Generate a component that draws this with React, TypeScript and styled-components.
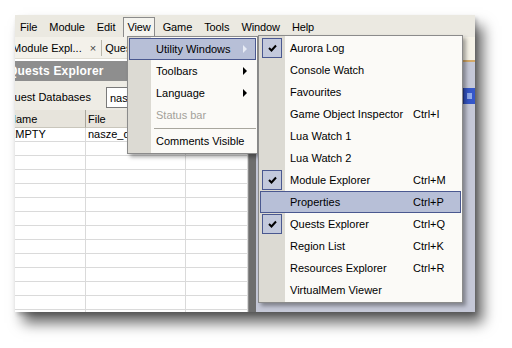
import styled, { createGlobalStyle } from 'styled-components';

const Global = createGlobalStyle`
  html, body {
    margin: 0;
    padding: 0;
    background: #ffffff;
  }
  body {
    font-family: "Liberation Sans", Arial, sans-serif;
    font-size: 11px;
    color: #000;
  }
`;

const Stage = styled.div`
  width: 512px;
  height: 348px;
  padding: 15px 0 0 15px;
  box-sizing: border-box;
  overflow: hidden;
`;

const Win = styled.div`
  position: relative;
  width: 460px;
  height: 297px;
  overflow: hidden;
  background: #ebe9e1;
  box-shadow: 8px 11px 13px rgba(0, 0, 0, 0.6), 2px 3px 4px rgba(0, 0, 0, 0.2);
`;

const MenuBar = styled.div`
  height: 22px;
  display: flex;
  align-items: flex-end;
  gap: 4px;
  padding-left: 1px;
  background: #ebe9e1;
`;

const BarItem = styled.div<{ $open?: boolean }>`
  height: 20px;
  line-height: 19px;
  padding: 0 3px;
  box-sizing: border-box;
  border: 1px solid ${p => (p.$open ? '#8b8b8b' : 'transparent')};
  border-bottom: none;
  background: ${p => (p.$open ? '#f4f3ee' : 'transparent')};
  letter-spacing: -0.1px;
`;

const Body = styled.div`
  display: flex;
  height: 275px;
`;

const LeftPane = styled.div`
  width: 233px;
  overflow: hidden;
  background: #ffffff;
`;

const LeftInner = styled.div`
  margin-left: -9px;
  width: 242px;
`;

const TabStrip = styled.div`
  height: 22px;
  display: flex;
  align-items: center;
  background: #f3f1ea;
  border-bottom: 1px solid #e0ddd3;
  box-sizing: border-box;
`;

const Tab = styled.div<{ $first?: boolean }>`
  display: flex;
  align-items: center;
  gap: 8px;
  padding: 0 ${p => (p.$first ? '5px' : '4px')} 0 ${p => (p.$first ? '6px' : '3px')};
  border-right: ${p => (p.$first ? '1px solid #b9b6aa' : 'none')};
  height: 16px;
`;

const Close = styled.span`
  font-size: 11px;
  color: #444;
`;

const TitleBar = styled.div`
  margin-top: 2px;
  height: 20px;
  line-height: 20px;
  padding-left: 2px;
  background: #8e8e8e;
  color: #ffffff;
  font-weight: bold;
  font-size: 12px;
  letter-spacing: 0.2px;
`;

const DbRow = styled.div`
  height: 29px;
  display: flex;
  align-items: center;
  background: #eeece5;
`;

const DbLabel = styled.span`
  width: 100px;
  padding-left: 0;
  padding-top: 3px;
`;

const DbInput = styled.div`
  flex: 1;
  height: 21px;
  margin-top: 3px;
  border: 1px solid #7a7a7a;
  background: #fff;
  line-height: 20px;
  padding-left: 3px;
  box-sizing: border-box;
`;

const Grid = styled.div`
  display: grid;
  grid-template-columns: 80px 100px 1fr;
`;

const HeadCell = styled.div`
  height: 18px;
  line-height: 18px;
  padding-left: 2px;
  background: #e7e4dc;
  border-right: 1px solid #a9a69c;
  border-bottom: 1px solid #c9c6bc;
  box-sizing: border-box;
`;

const Cell = styled.div`
  height: 14px;
  line-height: 13px;
  padding-left: 2px;
  border-right: 1px solid #dadada;
  border-bottom: 1px solid #dadada;
  box-sizing: border-box;
  overflow: hidden;
  white-space: nowrap;
`;

const Splitter = styled.div`
  width: 8px;
  background: #6e6e6e;
  border-left: 1px solid #8a8a8a;
  box-sizing: border-box;
`;

const RightPane = styled.div`
  flex: 1;
  display: flex;
  flex-direction: column;
  background: #c5c8d7;
`;

const RightTabs = styled.div`
  height: 23px;
  background: #f5f2e7;
  border-bottom: 2px solid #d4aa6a;
`;

const RightBody = styled.div`
  flex: 1;
  display: flex;
  justify-content: flex-end;
  padding-top: 26px;
`;

const BlueBtn = styled.div`
  width: 12px;
  height: 16px;
  background: #3557c9;
  border-left: 1px solid #2a3f94;
  box-sizing: border-box;
  display: flex;
  align-items: center;
  justify-content: center;
  &::after {
    content: '';
    width: 5px;
    height: 6px;
    background: #8fa9ea;
  }
`;

const Menu = styled.div<{ $left: number; $top: number; $width: number; $gutter: number }>`
  position: absolute;
  left: ${p => p.$left}px;
  top: ${p => p.$top}px;
  width: ${p => p.$width}px;
  box-sizing: border-box;
  padding: 1px;
  border: 1px solid #8b8b8b;
  background: linear-gradient(to right, #dcdad3 ${p => p.$gutter}px, #fbfaf7 ${p => p.$gutter}px);
  box-shadow: 3px 3px 4px rgba(0, 0, 0, 0.35);
`;

const Item = styled.div<{ $hot?: boolean; $gutter: number; $key: number; $arrow: number; $disabled?: boolean }>`
  height: 22px;
  display: grid;
  grid-template-columns: ${p => p.$gutter}px 1fr ${p => p.$key}px ${p => p.$arrow}px;
  align-items: center;
  box-sizing: border-box;
  border: 1px solid ${p => (p.$hot ? '#4a5890' : 'transparent')};
  background: ${p => (p.$hot ? '#b7bfd7' : 'transparent')};
  color: ${p => (p.$disabled ? '#a3a19a' : '#000')};
  white-space: nowrap;
`;

const Label = styled.span`
  padding-left: 4px;
`;

const Check = styled.div`
  width: 20px;
  height: 20px;
  margin-left: 1px;
  box-sizing: border-box;
  border: 1px solid #4a5890;
  background: #c3c9dc;
  display: flex;
  align-items: center;
  justify-content: center;
`;

const Sep = styled.div<{ $gutter: number }>`
  height: 4px;
  margin-left: ${p => p.$gutter + 3}px;
  display: flex;
  align-items: center;
  &::after {
    content: '';
    flex: 1;
    height: 1px;
    background: #a8a69e;
  }
`;

const Arrow = ({ light }: { light?: boolean }) => (
  <svg width="5" height="8" viewBox="0 0 5 8">
    <polygon points="0,0 4,4 0,8" fill={light ? '#e8ecf6' : '#000'} />
  </svg>
);

const Tick = () => (
  <svg width="9" height="8" viewBox="0 0 9 8">
    <polyline points="1,4 3.5,6.5 8,1.5" fill="none" stroke="#000" strokeWidth="2" />
  </svg>
);

const viewItems = [
  { label: 'Utility Windows', sub: true, hot: true },
  { label: 'Toolbars', sub: true },
  { label: 'Language', sub: true },
  { label: 'Status bar', disabled: true },
];

const utilItems = [
  { label: 'Aurora Log', check: true },
  { label: 'Console Watch' },
  { label: 'Favourites' },
  { label: 'Game Object Inspector', key: 'Ctrl+I' },
  { label: 'Lua Watch 1' },
  { label: 'Lua Watch 2' },
  { label: 'Module Explorer', key: 'Ctrl+M', check: true },
  { label: 'Properties', key: 'Ctrl+P', hot: true },
  { label: 'Quests Explorer', key: 'Ctrl+Q', check: true },
  { label: 'Region List', key: 'Ctrl+K' },
  { label: 'Resources Explorer', key: 'Ctrl+R' },
  { label: 'VirtualMem Viewer' },
];

const rows = Array.from({ length: 14 }, (_, i) =>
  i === 0 ? ['EMPTY', 'nasze_quests', ''] : ['', '', '']
);

const App = () => (
  <Stage>
    <Global />
    <Win>
      <MenuBar>
        {['File', 'Module', 'Edit', 'View', 'Game', 'Tools', 'Window', 'Help'].map(m => (
          <BarItem key={m} $open={m === 'View'}>{m}</BarItem>
        ))}
      </MenuBar>
      <Body>
        <LeftPane>
          <LeftInner>
            <TabStrip>
              <Tab $first>Module Expl... <Close>×</Close></Tab>
              <Tab>Quests</Tab>
            </TabStrip>
            <TitleBar>Quests Explorer</TitleBar>
            <DbRow>
              <DbLabel>Quest Databases</DbLabel>
              <DbInput>nasze_quests</DbInput>
            </DbRow>
            <Grid>
              <HeadCell>Name</HeadCell>
              <HeadCell>File</HeadCell>
              <HeadCell />
              {rows.map((r, i) =>
                r.map((c, j) => <Cell key={`${i}-${j}`}>{c}</Cell>)
              )}
            </Grid>
          </LeftInner>
        </LeftPane>
        <Splitter />
        <RightPane>
          <RightTabs />
          <RightBody>
            <BlueBtn />
          </RightBody>
        </RightPane>
      </Body>

      <Menu $left={112} $top={21} $width={131} $gutter={23}>
        {viewItems.map(it => (
          <Item key={it.label} $gutter={22} $key={0} $arrow={12} $hot={it.hot} $disabled={it.disabled}>
            <span />
            <Label>{it.label}</Label>
            <span />
            <span>{it.sub && <Arrow light={it.hot} />}</span>
          </Item>
        ))}
        <Sep $gutter={22} />
        <Item $gutter={22} $key={0} $arrow={12}>
          <span />
          <Label>Comments Visible</Label>
          <span />
          <span />
        </Item>
      </Menu>

      <Menu $left={243} $top={20} $width={205} $gutter={26}>
        {utilItems.map(it => (
          <Item key={it.label} $gutter={25} $key={47} $arrow={0} $hot={it.hot}>
            <span>{it.check && <Check><Tick /></Check>}</span>
            <Label>{it.label}</Label>
            <span>{it.key}</span>
            <span />
          </Item>
        ))}
      </Menu>
    </Win>
  </Stage>
);

export default App;
